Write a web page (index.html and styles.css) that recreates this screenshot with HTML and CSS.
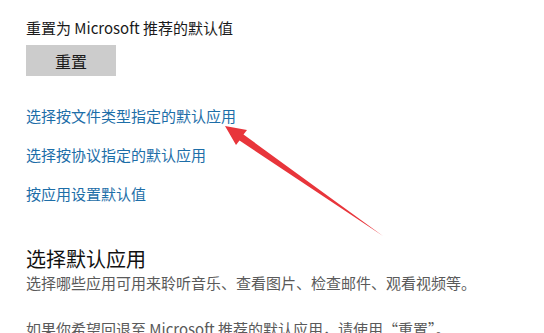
FILE: index.html
```html
<!DOCTYPE html>
<html lang="zh-CN">
<head>
    <meta charset="UTF-8">
    <title>默认应用</title>
    <link rel="stylesheet" href="styles.css">
</head>
<body>
    <div class="page">
        <div class="label">重置为 Microsoft 推荐的默认值</div>
        <button class="button">重置</button>

        <div class="links">
            <a class="link" href="#">选择按文件类型指定的默认应用</a>
            <a class="link" href="#">选择按协议指定的默认应用</a>
            <a class="link" href="#">按应用设置默认值</a>
        </div>

        <h2>选择默认应用</h2>
        <p class="desc">选择哪些应用可用来聆听音乐、查看图片、检查邮件、观看视频等。</p>
        <p class="desc">如果你希望回退至 Microsoft 推荐的默认应用，请使用“重置”。</p>
    </div>

    <!-- 红色箭头 -->
    <svg class="arrow" width="544" height="333" viewBox="0 0 544 333">
        <polygon points="225,126 247,130 243.5,134.5 383,236 239.5,140.5 236,145" fill="#e8353b"/>
    </svg>
</body>
</html>
```

FILE: styles.css
```css
body {
    margin: 0;
    background-color: #fff;
    color: #1a1a1a;
    font-family: "Noto Sans CJK SC", "Noto Sans", sans-serif;
    font-size: 15px;
    line-height: 20px;
    overflow: hidden;
}

.page {
    padding: 18px 0 0 26px;
}

.label {
    height: 20px;
}

.button {
    display: block;
    margin-top: 7px;
    width: 90px;
    height: 31px;
    border: none;
    background-color: #cccccc;
    color: #1a1a1a;
    font-family: inherit;
    font-size: 16px;
    padding: 0;
}

.links {
    display: flex;
    flex-direction: column;
    gap: 19px;
    margin-top: 30px;
}

.link {
    color: #1d6ea8;
    text-decoration: none;
    align-self: flex-start;
}

h2 {
    margin: 40px 0 0;
    font-size: 20px;
    font-weight: normal;
    line-height: 29px;
    color: #111;
}

.desc {
    margin: 0 0 26px;
    color: #5a5a5a;
}

.desc:last-child {
    margin-bottom: 0;
}

.arrow {
    position: absolute;
    left: 0;
    top: 0;
    pointer-events: none;
}
```
